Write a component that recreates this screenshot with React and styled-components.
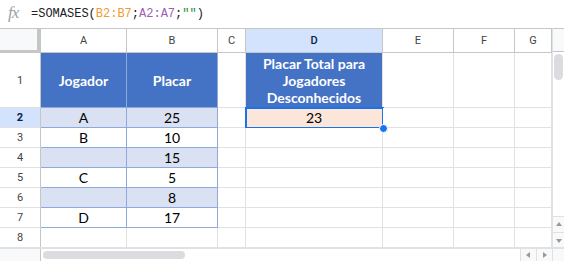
import React from 'react';
import styled, { createGlobalStyle } from 'styled-components';

const Global = createGlobalStyle`
  html, body { margin: 0; padding: 0; background: #fff; }
  body { width: 564px; height: 261px; overflow: hidden; font-family: Roboto, "Liberation Sans", sans-serif; }
  * { box-sizing: border-box; }
`;

const COLS = [41, 86, 91, 28, 137, 71, 61, 37];

const Page = styled.div`
  width: 564px;
  height: 261px;
  display: flex;
  flex-direction: column;
`;

const FormulaBar = styled.div`
  height: 28px;
  display: flex;
  align-items: center;
  padding-left: 8px;
  gap: 9px;
`;

const Fx = styled.span`
  font-family: "Liberation Serif", serif;
  font-style: italic;
  font-size: 17px;
  color: #a0a0a0;
  letter-spacing: -1px;
  width: 14px;
  margin-top: -2px;
`;

const Formula = styled.div`
  font-family: "Liberation Mono", monospace;
  font-size: 12px;
  color: #202124;
  white-space: pre;
`;

const Tok = styled.span`
  color: ${p => p.$c};
`;

const Main = styled.div`
  display: flex;
  height: 219px;
`;

const Grid = styled.div`
  width: 552px;
  display: grid;
  grid-template-columns: ${COLS.map(c => c + 'px').join(' ')};
  grid-template-rows: 24px 55px repeat(7, 20px);
  border-top: 1px solid #c4c7c5;
`;

const Corner = styled.div`
  background: #f8f9fa;
  border-right: 4px solid #c4c7c5;
  border-bottom: 3px solid #c4c7c5;
`;

const ColHead = styled.div`
  display: flex;
  align-items: center;
  justify-content: center;
  font-size: 11px;
  color: ${p => (p.$sel ? '#041e49' : '#444')};
  font-weight: ${p => (p.$sel ? 500 : 400)};
  background: ${p => (p.$sel ? '#d3e3fd' : '#fff')};
  border-right: 1px solid #c4c7c5;
  border-bottom: 1px solid #c4c7c5;
`;

const RowHead = styled.div`
  display: flex;
  align-items: center;
  justify-content: center;
  font-size: 11px;
  color: ${p => (p.$sel ? '#041e49' : '#444')};
  font-weight: ${p => (p.$sel ? 700 : 400)};
  background: ${p => (p.$sel ? '#d3e3fd' : '#fff')};
  border-right: 1px solid #c4c7c5;
  border-bottom: 1px solid #e1e1e1;
`;

const Cell = styled.div`
  position: relative;
  display: flex;
  align-items: center;
  justify-content: center;
  text-align: center;
  font-family: Lato, "Open Sans", sans-serif;
  font-size: 14px;
  color: #000;
  background: ${p => p.$bg || '#fff'};
  border-right: 1px solid ${p => p.$br || '#e1e1e1'};
  border-bottom: 1px solid ${p => p.$bb || '#e1e1e1'};
`;

const HeadCell = styled(Cell)`
  font-weight: 700;
  color: #fff;
  line-height: 17px;
  background: #4472c4;
`;

const Selected = styled(Cell)`
  &::after {
    content: '';
    position: absolute;
    top: -1px;
    left: -1px;
    right: -2px;
    bottom: -2px;
    border: 2px solid #1a73e8;
    pointer-events: none;
  }
`;

const Handle = styled.span`
  position: absolute;
  right: -6px;
  bottom: -6px;
  width: 9px;
  height: 9px;
  border-radius: 50%;
  background: #1a73e8;
  border: 1px solid #fff;
  z-index: 2;
`;

const VScroll = styled.div`
  width: 12px;
  display: flex;
  flex-direction: column;
  border-left: 1px solid #e1e1e1;
`;

const VScrollHead = styled.div`
  height: 24px;
  background: #f8f9fa;
  border-top: 1px solid #c4c7c5;
  border-bottom: 1px solid #c4c7c5;
`;

const VTrack = styled.div`
  flex: 1;
  padding: 2px 1px 0 1px;
`;

const Thumb = styled.div`
  background: #dadce0;
  border-radius: 5px;
  width: ${p => p.$w || '9px'};
  height: ${p => p.$h || '9px'};
`;

const ArrowBox = styled.div`
  height: ${p => p.$h || '15px'};
  width: ${p => p.$w || 'auto'};
  display: flex;
  align-items: center;
  justify-content: center;
  background: #f8f9fa;
  border-top: ${p => (p.$noTop ? 'none' : '1px solid #e1e1e1')};
  border-left: ${p => (p.$left ? '1px solid #e1e1e1' : 'none')};
`;

const Tri = styled.span`
  width: 0;
  height: 0;
  border: 3px solid transparent;
  ${p => p.$dir === 'up' && 'border-bottom: 4px solid #999; margin-top: -4px;'}
  ${p => p.$dir === 'down' && 'border-top: 4px solid #999; margin-bottom: -4px;'}
  ${p => p.$dir === 'left' && 'border-right: 4px solid #999; margin-left: -4px;'}
  ${p => p.$dir === 'right' && 'border-left: 4px solid #999; margin-right: -4px;'}
`;

const BottomBar = styled.div`
  height: 14px;
  display: flex;
  border-top: 2px solid #e1e1e1;
  background: #fff;
`;

const BottomLead = styled.div`
  width: 41px;
  background: #f8f9fa;
  border-right: 1px solid #c4c7c5;
`;

const HTrack = styled.div`
  flex: 1;
  padding: 2px 2px;
  background: #fff;
`;

const BLUE_LINE = '#8eaadb';
const BAND = '#d9e1f2';

const rows = [
  ['A', '25'],
  ['B', '10'],
  ['', '15'],
  ['C', '5'],
  ['', '8'],
  ['D', '17'],
];

const letters = ['A', 'B', 'C', 'D', 'E', 'F', 'G'];

export default function App() {
  return (
    <Page>
      <Global />
      <FormulaBar>
        <Fx>fx</Fx>
        <Formula>
          =SOMASES(<Tok $c="#f29a2e">B2:B7</Tok>;<Tok $c="#9c5fb5">A2:A7</Tok>;<Tok $c="#1e8e3e">""</Tok>)
        </Formula>
      </FormulaBar>
      <Main>
        <Grid>
          <Corner />
          {letters.map(l => (
            <ColHead key={l} $sel={l === 'D'}>{l}</ColHead>
          ))}

          <RowHead>1</RowHead>
          <HeadCell $br={BLUE_LINE} $bb={BLUE_LINE}>Jogador</HeadCell>
          <HeadCell $br={BLUE_LINE} $bb={BLUE_LINE}>Placar</HeadCell>
          <Cell />
          <HeadCell $br="#e1e1e1" $bb="#4472c4">Placar Total para<br />Jogadores<br />Desconhecidos</HeadCell>
          <Cell />
          <Cell />
          <Cell />

          {rows.map((r, i) => {
            const bg = i % 2 === 0 ? BAND : '#fff';
            return (
              <React.Fragment key={i}>
                <RowHead $sel={i === 0}>{i + 2}</RowHead>
                <Cell $bg={bg} $br={BLUE_LINE} $bb={BLUE_LINE}>{r[0]}</Cell>
                <Cell $bg={bg} $br={BLUE_LINE} $bb={BLUE_LINE}>{r[1]}</Cell>
                <Cell />
                {i === 0 ? (
                  <Selected $bg="#fce5d9">
                    23
                    <Handle />
                  </Selected>
                ) : (
                  <Cell />
                )}
                <Cell />
                <Cell />
                <Cell />
              </React.Fragment>
            );
          })}

          <RowHead>8</RowHead>
          {letters.map(l => (
            <Cell key={l} />
          ))}
        </Grid>
        <VScroll>
          <VScrollHead />
          <VTrack>
            <Thumb $h="26px" />
          </VTrack>
          <ArrowBox $h="16px"><Tri $dir="up" /></ArrowBox>
          <ArrowBox $h="15px"><Tri $dir="down" /></ArrowBox>
        </VScroll>
      </Main>
      <BottomBar>
        <BottomLead />
        <HTrack>
          <Thumb $w="142px" $h="8px" />
        </HTrack>
        <ArrowBox $h="12px" $w="16px" $noTop $left><Tri $dir="left" /></ArrowBox>
        <ArrowBox $h="12px" $w="16px" $noTop $left><Tri $dir="right" /></ArrowBox>
        <ArrowBox $h="12px" $w="12px" $noTop $left />
      </BottomBar>
    </Page>
  );
}
